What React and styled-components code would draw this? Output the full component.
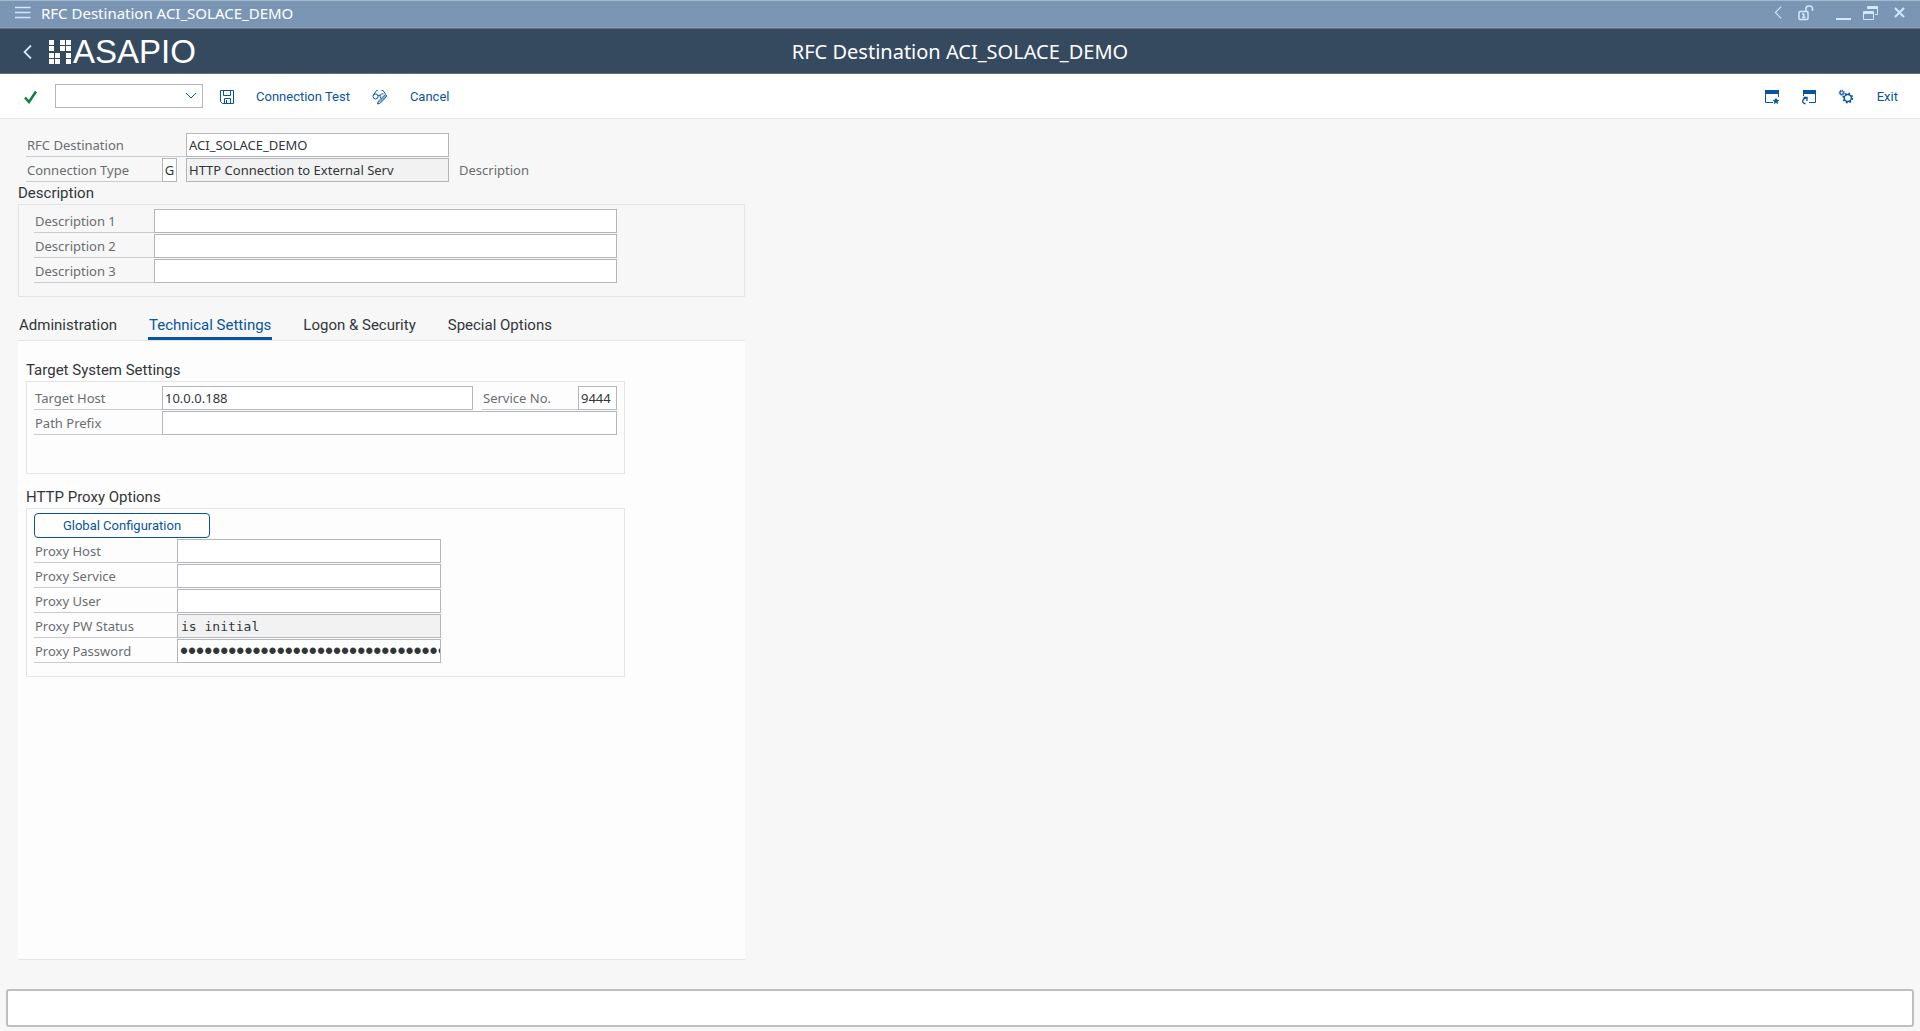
import React, {useState} from 'react';
import styled, { createGlobalStyle } from "styled-components";

const GlobalStyle = createGlobalStyle`
* { box-sizing: border-box; }
body {
  margin: 0;
  background: #f7f7f7;
  color: #32363a;
  font-family: "Noto Sans", sans-serif;
  font-size: 13px;
}
`

const Wrapper = styled.div`
display: flex;
flex-direction: column;
min-height: 100vh;
`

const TopBar = styled.div`
display: flex;
align-items: center;
height: 28px;
padding: 0 13px 3px 15px;
background: #7b96b5;
border-top: 1px solid #a3b7cd;
border-bottom: 1px solid #8da1b6;
`

const WindowTitle = styled.span`
flex: 1;
padding-left: 10px;
color: white;
font-size: 15px;
line-height: 20px;
`

const WindowButtons = styled.div`
display: flex;
align-items: center;
`

const IconButton = styled.button`
display: flex;
align-items: center;
justify-content: center;
width: 16px;
margin-left: ${props => props.$gap || 0}px;
padding: 0;
color: ${props => props.$color || '#d1e8ff'};
background: none;
border: none;
outline: none;
`

const Header = styled.header`
display: grid;
grid-template-columns: 1fr auto 1fr;
align-items: center;
height: 46px;
padding: 1px 19px 0;
background: #354a5f;
border-top: 1px solid #5f7183;
border-bottom: 1px solid #5f7183;
`

const Brand = styled.div`
display: flex;
align-items: center;
gap: 14px;
`

const Logo = styled.div`
display: flex;
align-items: center;
gap: 1px;
color: white;
font-family: "Liberation Sans", sans-serif;
font-size: 33px;
line-height: 36px;
`

const PageTitle = styled.h1`
margin: 0;
color: white;
font-size: 20px;
font-weight: 400;
line-height: 28px;
`

const Toolbar = styled.div`
display: flex;
align-items: center;
height: 45px;
padding: 1px 22px 0;
background: white;
border-bottom: 1px solid #e5e5e5;
`

const CommandField = styled.div`
display: flex;
align-items: center;
width: 148px;
height: 24px;
margin: 0 15px 2px 17px;
padding-right: 3px;
background: white;
border: 1px solid #b3b7bc;
`

const CommandInput = styled.input`
flex: 1;
min-width: 0;
height: 20px;
border: none;
outline: none;
`

const TextButton = styled.button`
margin-left: ${props => props.$gap}px;
padding: 0;
color: #0854a0;
font-family: Roboto, sans-serif;
font-size: 13px;
line-height: 20px;
background: none;
border: none;
outline: none;
`

const Spacer = styled.div`
flex: 1;
`

const Main = styled.main`
display: flex;
flex: 1;
flex-direction: column;
max-width: 745px;
padding: 14px 0 0 18px;
`

const Rows = styled.div`
display: flex;
flex-direction: column;
gap: 1px;
padding-left: ${props => props.$indent || 0}px;
`

const Row = styled.div`
display: flex;
height: 24px;
`

const Label = styled.label`
width: ${props => props.$width}px;
margin-left: ${props => props.$gap || 0}px;
padding-left: 1px;
color: #6a6d70;
line-height: 24px;
border-bottom: 1px solid ${props => props.$plain ? 'transparent' : '#c9cbcd'};
`

const Input = styled.input`
width: ${props => props.$width}px;
height: 24px;
margin-left: ${props => props.$gap || 0}px;
padding: 0 2px;
color: #32363a;
font-family: "Noto Sans", sans-serif;
font-size: 13px;
background: ${props => props.readOnly ? '#f2f2f2' : 'white'};
border: 1px solid #b3b7bc;
border-radius: 0;
outline: none;
`

const KeyInput = styled(Input)`
padding: 0;
text-align: center;
`

const MonoInput = styled(Input)`
padding: 0 3px;
font-family: "DejaVu Sans Mono", monospace;
`

const PasswordInput = styled(Input)`
padding: 0 0 0 2px;
font-family: "Liberation Sans", sans-serif;
font-size: 23px;
`

const GroupTitle = styled.h2`
margin: ${props => props.$top || 0}px 0 0;
font-family: Roboto, sans-serif;
font-size: 15px;
font-weight: 400;
line-height: 22px;
`

const Group = styled.section`
padding: 4px 7px ${props => props.$bottom || 13}px;
border: 1px solid #e5e5e5;
`

const Tabs = styled.div`
display: flex;
gap: 30px;
height: 34px;
margin-top: 10px;
border-bottom: 1px solid #e5e5e5;
`

const Tab = styled.button`
padding: 5px 1px 0;
color: ${props => props.$active ? '#0854a0' : '#32363a'};
font-family: Roboto, sans-serif;
font-size: 15px;
background: none;
border: none;
border-bottom: 3px solid ${props => props.$active ? '#0854a0' : 'transparent'};
outline: none;
`

const Panel = styled.div`
flex: 1;
padding: 18px 120px 18px 8px;
background: #fdfdfd;
border-bottom: 1px solid #e5e5e5;
`

const OutlineButton = styled.button`
width: 176px;
height: 25px;
padding: 0;
color: #0854a0;
font-family: Roboto, sans-serif;
font-size: 13px;
background: white;
border: 1px solid #0854a0;
border-radius: 4px;
outline: none;
`

const StatusBar = styled.footer`
height: 38px;
margin: 29px 6px 4px;
background: white;
border: 2px solid #bfbfbf;
border-radius: 3px;
`

const squares = [[0, 0], [11, 0], [17, 0], [0, 6], [11, 6], [17, 6], [0, 13], [6, 13], [17, 13], [0, 19], [6, 19], [17, 19]];

const MenuIcon = () => (
  <svg width="16" height="13" stroke="currentColor" strokeWidth="1.6"><path d="M0 1.500h15.500M0 6.500h15.500M0 11.500h15.500" /></svg>
)

const BackIcon = ({ width, height, stroke }) => (
  <svg width={width} height={height} viewBox="0 0 9 14" fill="none" stroke="currentColor" strokeWidth={stroke}><path d="M8 .5L1.500 7 8 13.500" /></svg>
)

const LockIcon = () => (
  <svg width="16" height="16" viewBox="0 0 16 16" fill="none" stroke="currentColor" strokeWidth="1.5">
    <rect x="1" y="6.500" width="9" height="8" rx="1" />
    <path d="M8 6.500V3.500A2.500 2.500 0 0 1 10.500 1h1.500A2.500 2.500 0 0 1 14.500 3.500V6" />
    <path d="M5.800 8.500v4M4 9h2M4 12.500h3.500" />
  </svg>
)

const MinimizeIcon = () => (
  <svg width="15" height="16"><path d="M0 14h15" stroke="currentColor" strokeWidth="2" /></svg>
)

const RestoreIcon = () => (
  <svg width="16" height="16" fill="none" stroke="currentColor">
    <path d="M4.500 4V1.500h10v8H12M4 2.500h11M4 3.500h11" />
    <path d="M.5 6.500h10v8H.5zM0 7.500h11M0 8.500h11" />
  </svg>
)

const CloseIcon = () => (
  <svg width="11" height="11" stroke="currentColor" strokeWidth="2"><path d="M1 1l9 9M10 1l-9 9" /></svg>
)

const CheckIcon = () => (
  <svg width="15" height="14" fill="none" stroke="#107e3e" strokeWidth="2.500"><path d="M2 7.500L6 12l7-10.500" /></svg>
)

const DownIcon = () => (
  <svg width="12" height="7" fill="none" stroke="#0854a0"><path d="M1 1l5 5 5-5" /></svg>
)

const SaveIcon = () => (
  <svg width="16" height="16" viewBox="0 0 16 16" fill="none" stroke="currentColor" strokeWidth="1">
    <path d="M1.500 1.500h13v13h-11l-2-2z" />
    <path d="M4.500 1.500v5h7v-5M5.500 14.500v-5h6v5M7.500 11v3.500" />
  </svg>
)

const GlassesIcon = () => (
  <svg width="16" height="16" viewBox="0 0 16 16" fill="none" stroke="currentColor" strokeWidth="1">
    <circle cx="3.500" cy="7.500" r="2.500" />
    <path d="M1.200 6.500L4.500 1.500h1.300M6 7q1-1.300 2.200-.5M9.500 9.500A2.400 2.400 0 0 1 11.500 5M9.500 1.500h1.500l2.500 3.500" />
    <path d="M5.500 15l1-3 6.800-6.500 1.700 1.600-6.500 6.800zM7.500 13l6.500-6.500" />
  </svg>
)

const FavoriteIcon = () => (
  <svg width="16" height="16" viewBox="0 0 16 16" fill="none" stroke="currentColor">
    <path d="M9 13.500H1.500v-12h13V8" strokeWidth="1" />
    <path d="M1 3h14" strokeWidth="4" />
    <path d="M12 8.500l1 2.300 2.500.2-1.900 1.700.6 2.500-2.200-1.400-2.200 1.400.6-2.500L8.500 11l2.500-.2z" fill="currentColor" stroke="none" />
  </svg>
)

const ShortcutIcon = () => (
  <svg width="16" height="16" viewBox="0 0 16 16" fill="none" stroke="currentColor">
    <path d="M2.500 7V1.500h12v12H8" strokeWidth="1" />
    <path d="M2 3h13" strokeWidth="4" />
    <path d="M4.500 14.500h-1A2 2 0 0 1 1.700 12.500Q1.800 9.300 5.500 9M2.500 8.500H6v3.500" strokeWidth="1.300" />
  </svg>
)

const GearsIcon = () => (
  <svg width="16" height="16" viewBox="0 0 16 16" fill="none" stroke="currentColor">
    <circle cx="3.700" cy="3.700" r="1.700" strokeWidth="1.100" />
    <circle cx="3.700" cy="3.700" r="2.600" strokeWidth="1" strokeDasharray="1.100 .94" />
    <circle cx="9.800" cy="9" r="3.500" strokeWidth="1.400" />
    <circle cx="9.800" cy="9" r="4.700" strokeWidth="1.500" strokeDasharray="1.800 1.890" />
  </svg>
)

const tabs = ["Administration", "Technical Settings", "Logon & Security", "Special Options"];

function App() {
  const [activeTab, setActiveTab] = useState("Technical Settings");

  return (
    <Wrapper>
      <GlobalStyle />
      <TopBar>
        <IconButton aria-label="Menu"><MenuIcon /></IconButton>
        <WindowTitle>RFC Destination ACI_SOLACE_DEMO</WindowTitle>
        <WindowButtons>
          <IconButton aria-label="Previous"><BackIcon width="8" height="13" stroke="1.2" /></IconButton>
          <IconButton $gap={12} aria-label="Lock"><LockIcon /></IconButton>
          <IconButton $gap={21} aria-label="Minimize"><MinimizeIcon /></IconButton>
          <IconButton $gap={12} aria-label="Restore"><RestoreIcon /></IconButton>
          <IconButton $gap={12} aria-label="Close"><CloseIcon /></IconButton>
        </WindowButtons>
      </TopBar>
      <Header>
        <Brand>
          <IconButton aria-label="Back"><BackIcon width="9" height="14" stroke="1.8" /></IconButton>
          <Logo>
            <svg width="23" height="24" fill="white">
              {squares.map(([x, y]) => <rect key={x + "-" + y} x={x} y={y} width="5" height="5" />)}
            </svg>
            ASAPIO
          </Logo>
        </Brand>
        <PageTitle>RFC Destination ACI_SOLACE_DEMO</PageTitle>
      </Header>
      <Toolbar>
        <IconButton aria-label="Enter"><CheckIcon /></IconButton>
        <CommandField>
          <CommandInput aria-label="Command" />
          <IconButton aria-label="Open list"><DownIcon /></IconButton>
        </CommandField>
        <IconButton $color="#0854a0" $gap={1} aria-label="Save"><SaveIcon /></IconButton>
        <TextButton $gap={21}>Connection Test</TextButton>
        <IconButton $color="#0854a0" $gap={22} aria-label="Display / Change"><GlassesIcon /></IconButton>
        <TextButton $gap={22}>Cancel</TextButton>
        <Spacer />
        <IconButton $color="#0854a0" aria-label="New window"><FavoriteIcon /></IconButton>
        <IconButton $color="#0854a0" $gap={21} aria-label="Create shortcut"><ShortcutIcon /></IconButton>
        <IconButton $color="#0854a0" $gap={21} aria-label="Settings"><GearsIcon /></IconButton>
        <TextButton $gap={23}>Exit</TextButton>
      </Toolbar>

      <Main>
        <Rows $indent={8}>
          <Row>
            <Label htmlFor="destination" $width={160}>RFC Destination</Label>
            <Input id="destination" $width={263} defaultValue="ACI_SOLACE_DEMO" />
          </Row>
          <Row>
            <Label htmlFor="type" $width={136}>Connection Type</Label>
            <KeyInput id="type" $width={15} defaultValue="G" />
            <Input id="typeText" $width={263} $gap={9} readOnly value="HTTP Connection to External Serv" aria-label="Connection type text" />
            <Label as="span" $width={80} $gap={9} $plain>Description</Label>
          </Row>
        </Rows>

        <GroupTitle>Description</GroupTitle>
        <Group>
          <Rows $indent={8}>
            {[1, 2, 3].map(n => (
              <Row key={n}>
                <Label htmlFor={"description" + n} $width={120}>Description {n}</Label>
                <Input id={"description" + n} $width={463} />
              </Row>
            ))}
          </Rows>
        </Group>

        <Tabs>
          {tabs.map(tab => (
            <Tab key={tab} $active={tab === activeTab} onClick={() => setActiveTab(tab)}>{tab}</Tab>
          ))}
        </Tabs>
        <Panel>
          <GroupTitle>Target System Settings</GroupTitle>
          <Group $bottom={38}>
            <Rows>
              <Row>
                <Label htmlFor="host" $width={128}>Target Host</Label>
                <Input id="host" $width={311} defaultValue="10.0.0.188" />
                <Label htmlFor="service" $width={96} $gap={9}>Service No.</Label>
                <Input id="service" $width={39} defaultValue="9444" />
              </Row>
              <Row>
                <Label htmlFor="prefix" $width={128}>Path Prefix</Label>
                <Input id="prefix" $width={455} />
              </Row>
            </Rows>
          </Group>

          <GroupTitle $top={12}>HTTP Proxy Options</GroupTitle>
          <Group>
            <Rows>
              <OutlineButton>Global Configuration</OutlineButton>
              <Row>
                <Label htmlFor="proxyHost" $width={143}>Proxy Host</Label>
                <Input id="proxyHost" $width={264} />
              </Row>
              <Row>
                <Label htmlFor="proxyService" $width={143}>Proxy Service</Label>
                <Input id="proxyService" $width={264} />
              </Row>
              <Row>
                <Label htmlFor="proxyUser" $width={143}>Proxy User</Label>
                <Input id="proxyUser" $width={264} />
              </Row>
              <Row>
                <Label htmlFor="proxyStatus" $width={143}>Proxy PW Status</Label>
                <MonoInput id="proxyStatus" $width={264} readOnly value="is initial" />
              </Row>
              <Row>
                <Label htmlFor="proxyPassword" $width={143}>Proxy Password</Label>
                <PasswordInput id="proxyPassword" type="password" $width={264} defaultValue={"x".repeat(40)} />
              </Row>
            </Rows>
          </Group>
        </Panel>
      </Main>
      <StatusBar />
    </Wrapper>
  );
}

export default App;
